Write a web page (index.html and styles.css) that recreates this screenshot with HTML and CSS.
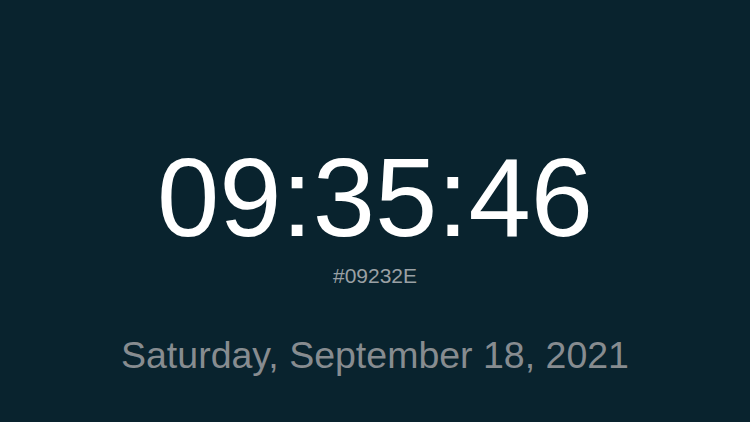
FILE: index.html
```html
<!DOCTYPE html>
<html>
<head>
<meta charset="utf-8">
<link rel="stylesheet" href="styles.css">
</head>
<body>
<main class="clock">
  <div class="time">09:35:46</div>
  <div class="hex">#09232E</div>
  <div class="date">Saturday, September 18, 2021</div>
</main>
</body>
</html>
```
FILE: styles.css
```css
html, body {
  margin: 0;
  padding: 0;
  width: 750px;
  height: 422px;
  background: #09232E;
  overflow: hidden;
}
.clock {
  display: flex;
  flex-direction: column;
  align-items: center;
  padding-top: 142px;
  font-family: "Liberation Sans", Arial, sans-serif;
}
.time {
  font-size: 112px;
  line-height: 112px;
  color: #ffffff;
}
.hex {
  font-size: 21px;
  line-height: 24px;
  color: #9aa0a4;
  margin-top: 10px;
}
.date {
  font-size: 37.5px;
  line-height: 44px;
  color: #878c90;
  margin-top: 45px;
}
```
